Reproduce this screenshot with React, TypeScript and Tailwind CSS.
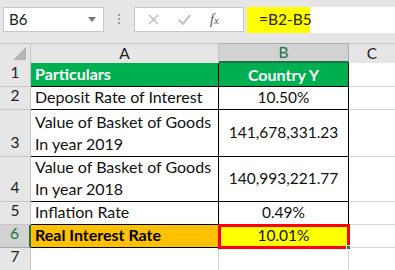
import React from 'react';

const font = { fontFamily: 'Lato, "Liberation Sans", sans-serif' };

type Row = {
    n: number;
    h: string;
    a: React.ReactNode;
    b: string;
    kind?: 'head' | 'result';
};

const rows: Row[] = [
    { n: 1, h: 'h-[24px]', a: 'Particulars', b: 'Country Y', kind: 'head' },
    { n: 2, h: 'h-[23px]', a: 'Deposit Rate of Interest', b: '10.50%' },
    { n: 3, h: 'h-[47px]', a: <>Value of Basket of Goods<br />In year 2019</>, b: '141,678,331.23' },
    { n: 4, h: 'h-[45px]', a: <>Value of Basket of Goods<br />In year 2018</>, b: '140,993,221.77' },
    { n: 5, h: 'h-[23px]', a: 'Inflation Rate', b: '0.49%' },
    { n: 6, h: 'h-[23px]', a: 'Real Interest Rate', b: '10.01%', kind: 'result' },
];

function FormulaBar() {
    return (
        <div className="flex h-[43px] items-start bg-[#e6e6e6] pt-[7px] pl-[3px]">
            <div className="flex h-[25px] w-[101px] items-center justify-between border border-[#c6c6c6] bg-white pl-[5px] pr-[7px] text-[15px] text-[#222]">
                <span>B6</span>
                <svg width="8" height="5" viewBox="0 0 8 5"><path d="M0 0h8L4 5z" fill="#777" /></svg>
            </div>
            <div className="flex w-[30px] flex-col items-center gap-[2px] pt-[7px]">
                <span className="h-[2px] w-[2px] bg-[#999]" />
                <span className="h-[2px] w-[2px] bg-[#999]" />
                <span className="h-[2px] w-[2px] bg-[#999]" />
            </div>
            <div className="flex h-[25px] w-[110px] items-center border border-[#c6c6c6] bg-white">
                <svg className="ml-[13px]" width="11" height="11" viewBox="0 0 11 11"><path d="M1 1l9 9M10 1l-9 9" stroke="#bbb" strokeWidth="1.3" /></svg>
                <svg className="ml-[19px]" width="13" height="11" viewBox="0 0 13 11"><path d="M1 6l4 4 7-9" stroke="#bbb" strokeWidth="1.8" fill="none" /></svg>
                <span className="ml-[19px] text-[14px] italic text-[#555]" style={{ fontFamily: '"Liberation Serif", serif' }}>f<span className="text-[11px]">x</span></span>
            </div>
            <div className="ml-[3px] flex h-[26px] flex-1 bg-white">
                <div className="flex h-full w-[63px] items-center whitespace-nowrap bg-[#ffff00] pl-[12px] text-[15.5px] text-[#222]">=B2-B5</div>
            </div>
        </div>
    );
}

export default function App() {
    return (
        <div className="h-[270px] w-[395px] overflow-hidden bg-white" style={font}>
            <FormulaBar />
            <div className="grid grid-cols-[31px_188px_130px_1fr]">
                <div className="relative h-[20px] border-t border-r border-[#c6c6c6] bg-[#e6e6e6]">
                    <svg className="absolute right-[4px] bottom-[3px]" width="13" height="13" viewBox="0 0 13 13"><path d="M13 0v13H0z" fill="#b4b4b4" /></svg>
                </div>
                <div className="flex h-[20px] items-center justify-center border-t border-r border-[#c6c6c6] bg-[#e6e6e6] text-[15.5px] text-[#222]">A</div>
                <div className="flex h-[20px] items-center justify-center border-t border-r border-b-2 border-[#ababab] border-b-[#217346] bg-[#d2d2d2] text-[15.5px] text-[#217346]">B</div>
                <div className="flex h-[20px] items-center justify-center border-t border-[#c6c6c6] bg-[#e6e6e6] text-[15.5px] text-[#222]">C</div>

                {rows.map(r => {
                    const sel = r.kind === 'result';
                    const aCls = r.kind === 'head'
                        ? 'bg-[#00b050] font-bold text-white'
                        : sel ? 'bg-[#ffc000] font-bold text-black' : 'bg-white text-[#111]';
                    const bCls = r.kind === 'head'
                        ? 'bg-[#00b050] font-bold text-white text-[16px]'
                        : sel ? 'bg-[#ffff00] text-[#111] text-[15.5px] outline-[3px] outline-[#ff0000] -outline-offset-[2px] relative' : 'bg-white text-[#111] text-[15.5px]';
                    return (
                        <React.Fragment key={r.n}>
                            <div className={`${r.h} flex items-end justify-center border-b border-r pb-[2px] text-[15.5px] ${sel ? 'border-[#ababab] border-r-2 border-r-[#217346] bg-[#d2d2d2] text-[#217346]' : 'border-[#c6c6c6] bg-[#e6e6e6] text-[#222]'}`}>{r.n}</div>
                            <div className={`${r.h} flex items-end whitespace-nowrap border-b border-r border-black pl-[4px] pb-[1px] text-[16px] leading-[22px] ${aCls}`}>
                                <span>{r.a}</span>
                            </div>
                            <div className={`${r.h} flex items-center justify-center border-b border-r border-black ${bCls}`}>
                                {r.b}
                                {sel && <span className="absolute -right-[3px] -bottom-[3px] h-[5px] w-[5px] border border-white bg-[#217346]" />}
                            </div>
                            <div className={`${r.h} border-b border-[#d4d4d4]`} />
                        </React.Fragment>
                    );
                })}

                <div className="flex h-[22px] items-end justify-center border-r border-[#c6c6c6] bg-[#e6e6e6] pb-[2px] text-[15.5px] text-[#222]">7</div>
                <div className="h-[22px] border-r border-[#d4d4d4]" />
                <div className="h-[22px] border-r border-[#d4d4d4]" />
                <div className="h-[22px]" />
            </div>
        </div>
    );
}
